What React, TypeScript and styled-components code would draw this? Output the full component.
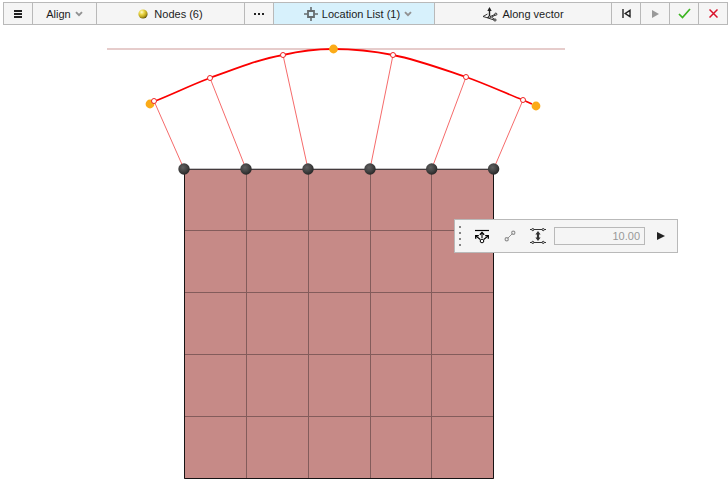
import React from "react";
import styled, { createGlobalStyle } from "styled-components";

const Global = createGlobalStyle`
  * { box-sizing: border-box; }
  body { margin: 0; background: #fff; }
  button, input { font-family: "Liberation Sans", Arial, sans-serif; }
`;

const Page = styled.main`
  font-family: "Liberation Sans", Arial, sans-serif;
  font-size: 11px;
  color: #1c1c1c;
`;

const GuideBar = styled.nav`
  display: grid;
  grid-template-columns: 29px 64px 148fr 29px 161fr 177fr 29px 29px 29px 28px;
  height: 23px;
  margin: 2px 0 0 3px;
  border: 1px solid #b9b9b9;
`;

const Cell = styled.button<{ $active?: boolean }>`
  display: flex;
  align-items: center;
  justify-content: center;
  gap: 4px;
  min-width: 0;
  padding: 0 0 0 ${(p) => (p.$active ? "8px" : "0")};
  border: 0;
  border-right: 1px solid #b9b9b9;
  background: ${(p) => (p.$active ? "#d7f1fc" : "#f5f5f5")};
  color: inherit;
  font-size: 11px;
  line-height: 20px;
  white-space: nowrap;
  &:last-child { border-right: 0; }
`;

const Icon = styled.svg`
  display: block;
  flex: none;
`;

const Stage = styled.section`
  position: relative;
`;

const Model = styled.svg`
  display: block;
  width: 100%;
  height: auto;
`;

const MicroDialog = styled.div`
  position: absolute;
  left: 454px;
  top: 194px;
  display: flex;
  align-items: center;
  width: 224px;
  height: 34px;
  padding-left: 4px;
  background: #f5f5f5;
  border: 1px solid #b9b9b9;
`;

const Tool = styled.button`
  display: flex;
  align-items: center;
  justify-content: center;
  width: 28px;
  height: 28px;
  padding: 0;
  border: 0;
  background: transparent;
`;

const Grip = styled(Icon)`
  margin-right: 7px;
`;

const Distance = styled.input`
  width: 91px;
  height: 18px;
  margin: 0 2px;
  padding: 0 4px;
  border: 1px solid #b9b9b9;
  border-radius: 0;
  background: #f5f5f5;
  color: #999;
  font-size: 11px;
  text-align: right;
`;

const Chevron = () => (
  <Icon width="8" height="6" viewBox="0 0 8 6">
    <path d="M1 1.2 4 4.2 7 1.2" fill="none" stroke="#929292" strokeWidth="1.9" />
  </Icon>
);

const MenuIcon = () => (
  <Icon width="8" height="8" viewBox="0 0 8 8" fill="#222">
    <path d="M0 0h8v2H0zM0 3h8v2H0zM0 6h8v2H0z" />
  </Icon>
);

const NodeIcon = () => (
  <Icon width="12" height="10" viewBox="0 0 12 10">
    <defs>
      <radialGradient id="gold" cx="0.36" cy="0.3" r="0.72">
        <stop offset="0" stopColor="#fffbd0" />
        <stop offset="0.35" stopColor="#ecd94a" />
        <stop offset="0.75" stopColor="#b79f1a" />
        <stop offset="1" stopColor="#5f520a" />
      </radialGradient>
    </defs>
    <circle cx="5" cy="5" r="4.6" fill="url(#gold)" />
  </Icon>
);

const DotsIcon = () => (
  <Icon width="10" height="2" viewBox="0 0 10 2" fill="#222">
    <path d="M0 0h2v2H0zM4 0h2v2H4zM8 0h2v2H8z" />
  </Icon>
);

const LocationIcon = () => (
  <Icon width="14" height="14" viewBox="0 0 14 14" fill="none" stroke="#666c6e">
    <path d="M4 4h6v6H4z" strokeWidth="1.8" />
    <path d="M7 0v3.5M7 10.5V14M0 7h3.5M10.5 7H14" strokeWidth="1.6" />
  </Icon>
);

const VectorIcon = () => (
  <Icon width="16" height="16" viewBox="0 0 16 16" fill="none" stroke="#222">
    <path d="M5.5 8 1 10.5 5 11.7 12 14M13.5 9 9.5 11.2 12.5 13.3M5 11.6 9 10.2 13 8.4" strokeWidth="0.9" />
    <path d="M7.5 10.5V4" strokeWidth="1.4" />
    <path d="M7.5 1 9.7 5H5.3z" fill="#222" stroke="none" />
    <g fill="#f5f5f5" strokeWidth="0.9">
      <circle cx="7.5" cy="11" r="1.1" />
      <circle cx="13.8" cy="8.2" r="1.1" />
      <circle cx="13" cy="14" r="1.1" />
    </g>
  </Icon>
);

const AlignIcon = () => (
  <Icon width="16" height="16" viewBox="0 0 16 16" fill="none" stroke="#000">
    <path d="M1 2.5h14" strokeWidth="1.2" />
    <path d="M8 10V4.500M6.300 11.500 2 8M9.700 11.500 14 8" strokeWidth="1.100" />
    <path d="M5.800 6.700 8 4.500l2.200 2.200M1.700 10.800V7.700h3.100M14.300 10.800V7.700h-3.100" strokeWidth="1.300" />
    <circle cx="8" cy="13" r="1.8" fill="#fff" strokeWidth="1" />
  </Icon>
);

const LinkIcon = () => (
  <Icon width="12" height="12" viewBox="0 0 12 12" fill="none" stroke="#929292">
    <path d="M3.5 8.5 8.5 3.5" strokeWidth="1" />
    <circle cx="2.7" cy="9.2" r="1.6" strokeWidth="1.2" />
    <circle cx="9.3" cy="2.8" r="1.6" strokeWidth="1.2" />
  </Icon>
);

const SpacingIcon = () => (
  <Icon width="16" height="16" viewBox="0 0 16 16" fill="none" stroke="#333">
    <path d="M0 1.5h16M0 14.5h16" strokeWidth="1" />
    <path d="M8 5v6" strokeWidth="2.2" />
    <path d="M8 3l2.6 3.5H5.4zM8 13l2.6-3.5H5.4z" fill="#333" stroke="none" />
    <g fill="#f5f5f5" strokeWidth="1">
      <circle cx="2.8" cy="1.6" r="1.1" />
      <circle cx="13.2" cy="1.6" r="1.1" />
      <circle cx="2.8" cy="14.4" r="1.1" />
      <circle cx="13.2" cy="14.4" r="1.1" />
    </g>
  </Icon>
);

const nodes = [184, 246, 308, 370, 431.7, 493.6];
const columns = [246, 308, 370, 431];
const rows = [230, 292, 354, 416];
const targets = [
  [154, 101],
  [210, 78],
  [283, 55],
  [393, 55],
  [466, 77],
  [523, 100],
];
const controls = [
  [150, 104],
  [333.5, 49],
  [536, 106],
];

const MeshModel = () => (
  <Model viewBox="0 25 728 466" role="img" aria-label="Mesh nodes aligned to a curve">
    <defs>
      <radialGradient id="dark" cx="0.4" cy="0.36" r="0.66">
        <stop offset="0" stopColor="#606060" />
        <stop offset="0.55" stopColor="#434343" />
        <stop offset="1" stopColor="#262626" />
      </radialGradient>
    </defs>
    <rect x="184" y="169" width="310" height="310" fill="#c68a87" />
    <g stroke="#835c5b" shapeRendering="crispEdges">
      {columns.map((x) => (
        <path key={x} d={`M${x + 0.5} 170V478`} />
      ))}
      {rows.map((y) => (
        <path key={y} d={`M185 ${y + 0.5}H493`} />
      ))}
    </g>
    <path d="M184 168.5H494" stroke="#c4c2c4" />
    <path d="M184 169.5H494" stroke="#443b3d" />
    <path d="M184.5 169V478.5H493.5V169" fill="none" stroke="#171314" />
    <path d="M107 49H565" stroke="#e6cccb" strokeWidth="2" />
    <g stroke="#f66b6b" strokeWidth="1">
      {targets.map(([x, y], i) => (
        <path key={x} d={`M${x} ${y}L${nodes[i]} 169`} />
      ))}
    </g>
    <path
      d="M154 101.5C173 94 191 85 210 78C234 69 258 59.5 283 55C300 51 317 49 333 49C353 49 373 51 393 55C418 60 442 69 466 77C486 84 505 93 523 100L532 104"
      fill="none"
      stroke="#fb0000"
      strokeWidth="1.8"
    />
    {controls.map(([x, y]) => (
      <circle key={x} cx={x} cy={y} r="4.4" fill="#fbab18" />
    ))}
    {targets.map(([x, y]) => (
      <circle key={x} cx={x} cy={y} r="2.5" fill="#fff" stroke="#ee2424" />
    ))}
    {nodes.map((x) => (
      <circle key={x} cx={x} cy="169" r="5.7" fill="url(#dark)" />
    ))}
  </Model>
);

export default function App() {
  return (
    <Page>
      <Global />
      <GuideBar aria-label="Align guide bar">
        <Cell aria-label="Menu"><MenuIcon /></Cell>
        <Cell>Align <Chevron /></Cell>
        <Cell><NodeIcon />Nodes (6)</Cell>
        <Cell aria-label="Selection options"><DotsIcon /></Cell>
        <Cell $active><LocationIcon />Location List (1) <Chevron /></Cell>
        <Cell><VectorIcon />Along vector</Cell>
        <Cell aria-label="Reset">
          <Icon width="9" height="9" viewBox="0 0 9 9" fill="none" stroke="#222" strokeWidth="1.4">
            <path d="M1 0v9M8 1.3v6.4L3.2 4.5z" />
          </Icon>
        </Cell>
        <Cell aria-label="Proceed">
          <Icon width="8" height="8" viewBox="0 0 8 8"><path d="M1 0v8l7-4z" fill="#999" /></Icon>
        </Cell>
        <Cell aria-label="Confirm">
          <Icon width="13" height="11" viewBox="0 0 13 11"><path d="M1 6 4.5 9.5 12 1" fill="none" stroke="#3cb521" strokeWidth="1.7" /></Icon>
        </Cell>
        <Cell aria-label="Cancel">
          <Icon width="9" height="9" viewBox="0 0 9 9"><path d="M.5.5l8 8M8.5.5l-8 8" fill="none" stroke="#d9132b" strokeWidth="1.5" /></Icon>
        </Cell>
      </GuideBar>
      <Stage>
        <MeshModel />
        <MicroDialog>
          <Grip width="2" height="20" viewBox="0 0 2 20" fill="#858585">
            <path d="M0 0h2v2H0zM0 6h2v2H0zM0 12h2v2H0zM0 18h2v2H0z" />
          </Grip>
          <Tool aria-label="Align nodes"><AlignIcon /></Tool>
          <Tool aria-label="Link nodes"><LinkIcon /></Tool>
          <Tool aria-label="Offset"><SpacingIcon /></Tool>
          <Distance aria-label="Distance" defaultValue="10.00" />
          <Tool aria-label="Apply">
            <Icon width="8" height="8" viewBox="0 0 8 8"><path d="M0 0v8l8-4z" fill="#222" /></Icon>
          </Tool>
        </MicroDialog>
      </Stage>
    </Page>
  );
}
